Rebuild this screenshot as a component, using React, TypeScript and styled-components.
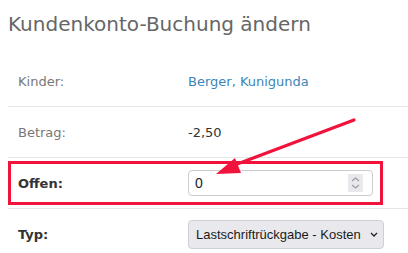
import styled, { createGlobalStyle } from 'styled-components'

const GlobalStyle = createGlobalStyle`
  html, body {
    margin: 0;
    padding: 0;
    background: #fff;
    overflow: hidden;
  }
  body {
    font-family: 'DejaVu Sans', Verdana, sans-serif;
  }
`

const Page = styled.div`
  position: relative;
  width: 408px;
  height: 253px;
  padding: 0 0 0 8px;
  box-sizing: border-box;
`

const Title = styled.h2`
  margin: 0;
  padding-top: 12px;
  font-size: 20px;
  font-weight: normal;
  line-height: 24px;
  color: #666;
`

const Table = styled.div`
  margin-top: 20px;
  width: 420px;
`

const Row = styled.div<{ $last?: boolean }>`
  position: relative;
  display: grid;
  grid-template-columns: 180px 1fr;
  align-items: center;
  height: 51px;
  box-sizing: border-box;
  border-bottom: ${p => (p.$last ? 'none' : '1px solid #e6e6e6')};
`

const Label = styled.span<{ $strong?: boolean }>`
  padding-left: 10px;
  font-size: 13px;
  font-weight: ${p => (p.$strong ? 'bold' : 'normal')};
  color: ${p => (p.$strong ? '#333' : '#777')};
`

const Value = styled.span<{ $link?: boolean }>`
  font-size: 13px;
  color: ${p => (p.$link ? '#3d85b8' : '#333')};
`

const Highlight = styled.div`
  position: absolute;
  left: 0;
  top: 3px;
  width: 375px;
  height: 44px;
  box-sizing: border-box;
  border: 3px solid #f0143c;
  pointer-events: none;
`

const InputWrap = styled.div`
  position: relative;
  width: 185px;
  height: 26px;
`

const NumberInput = styled.input`
  width: 100%;
  height: 100%;
  box-sizing: border-box;
  border: 1px solid #ccc;
  border-radius: 4px;
  padding: 0 6px;
  font-family: 'Liberation Sans', Arial, sans-serif;
  font-size: 14px;
  color: #222;
  background: #fff;
  outline: none;
`

const Spinner = styled.div`
  position: absolute;
  right: 10px;
  top: 4px;
  width: 15px;
  height: 18px;
  background: #e9e9ed;
  display: flex;
  align-items: center;
  justify-content: center;
`

const SelectWrap = styled.div`
  position: relative;
  width: 196px;
  height: 29px;
`

const Select = styled.select`
  -webkit-appearance: none;
  appearance: none;
  width: 100%;
  height: 100%;
  box-sizing: border-box;
  border: 1px solid #cfcfd6;
  border-radius: 4px;
  background: #e9e9ed;
  padding: 0 0 0 7px;
  font-family: 'Liberation Sans', Arial, sans-serif;
  font-size: 13px;
  color: #1b1b1b;
`

const Chevron = styled.svg`
  position: absolute;
  right: 6px;
  top: 12px;
  pointer-events: none;
`

const Arrow = styled.svg`
  position: absolute;
  left: 0;
  top: 0;
  pointer-events: none;
`

export default function App() {
  return (
    <Page>
      <GlobalStyle />
      <Title>Kundenkonto-Buchung ändern</Title>
      <Table>
        <Row>
          <Label>Kinder:</Label>
          <Value $link>Berger, Kunigunda</Value>
        </Row>
        <Row>
          <Label>Betrag:</Label>
          <Value>-2,50</Value>
        </Row>
        <Row>
          <Highlight />
          <Label $strong>Offen:</Label>
          <InputWrap>
            <NumberInput type="text" defaultValue="0" />
            <Spinner>
              <svg width="9" height="14" viewBox="0 0 9 14" fill="none" stroke="#9a9aa2" strokeWidth="1.2">
                <path d="M1 5 L4.5 2 L8 5" />
                <path d="M1 9 L4.5 12 L8 9" />
              </svg>
            </Spinner>
          </InputWrap>
        </Row>
        <Row $last>
          <Label $strong>Typ:</Label>
          <SelectWrap>
            <Select defaultValue="k">
              <option value="k">Lastschriftrückgabe - Kosten</option>
            </Select>
            <Chevron width="8" height="5" viewBox="0 0 8 5">
              <path d="M1 1 L4 4 L7 1" fill="none" stroke="#222" strokeWidth="1.3" />
            </Chevron>
          </SelectWrap>
        </Row>
      </Table>
      <Arrow width="408" height="253" viewBox="0 0 408 253">
        <line x1="354" y1="120" x2="232" y2="166" stroke="#f0143c" strokeWidth="3.2" strokeLinecap="round" />
        <polygon points="216,174 235,158 241,173" fill="#f0143c" />
      </Arrow>
    </Page>
  )
}
